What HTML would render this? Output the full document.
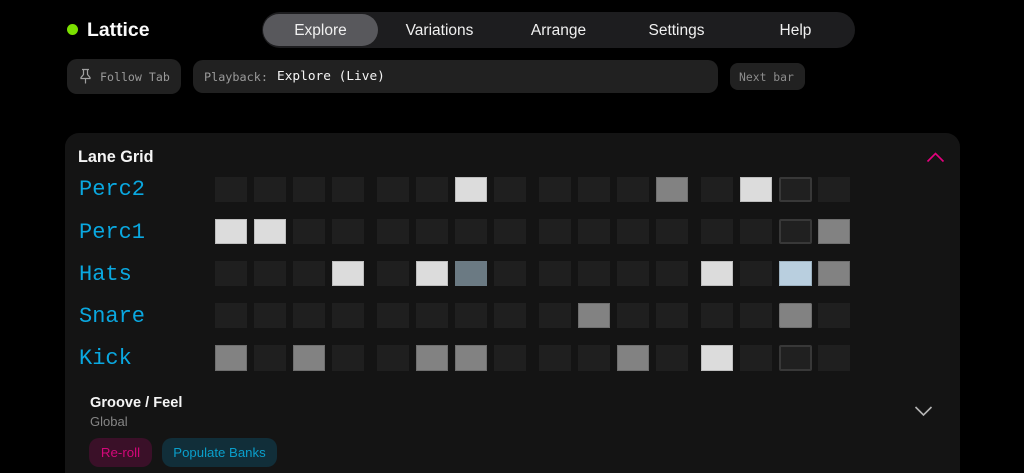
<!DOCTYPE html>
<html>
<head>
<meta charset="utf-8">
<style>
html,body{margin:0;padding:0;background:#000;width:1024px;height:473px;overflow:hidden}
body{position:relative;font-family:"Liberation Sans",sans-serif;color:#fff}
.a{position:absolute;white-space:nowrap}
.mono{font-family:"DejaVu Sans Mono",monospace}
.cell{position:absolute;width:32px;height:25.4px;background:#1f1f1f;box-sizing:border-box}
.w{background:#dcdcdc;box-shadow:inset 0 0 0 1px #bdbdbd}
.g{background:#828282;box-shadow:inset 0 0 0 1px #6f6f6f}
.s{background:#6b7a83}
.b{background:#b9cfdf;box-shadow:inset 0 0 0 1px #9cb1c0}
.r{border:2px solid #383838;border-radius:2px;background:#202020;width:33px}
.lab{font-family:"Liberation Mono",monospace;font-size:22px;color:#0aa8e0;left:79px;line-height:26px}
.tab{position:absolute;top:0;height:35px;line-height:35px;text-align:center;font-size:15.5px;color:#f0f0f0;width:119px}
</style>
</head>
<body>
<div class="a" style="left:67px;top:24px;width:11px;height:11px;border-radius:50%;background:#7be000"></div>
<div class="a" style="left:87px;top:16px;font-size:19.4px;font-weight:700;line-height:28px;color:#fafafa">Lattice</div>

<div class="a" style="left:262px;top:12px;width:593px;height:36px;border-radius:18px;background:#1d1d1f"></div>
<div class="a" style="left:263px;top:14px;width:115px;height:32px;border-radius:16px;background:#58585c"></div>
<div class="a" style="left:262px;top:13px;width:593px;height:35px">
<div class="tab" style="left:-1px">Explore</div>
<div class="tab" style="left:118px">Variations</div>
<div class="tab" style="left:237px">Arrange</div>
<div class="tab" style="left:355px">Settings</div>
<div class="tab" style="left:474px">Help</div>
</div>

<div class="a" style="left:67px;top:59px;width:114px;height:35px;border-radius:10px;background:#212121"></div>
<svg class="a" style="left:78px;top:68px" width="15" height="17" viewBox="0 0 15 17" fill="none" stroke="#a0a0a0" stroke-width="1.2"><path d="M4 1.5H11M5.5 1.5V6.5L3 9.5V10.5H12V9.5L9.5 6.5V1.5M7.5 10.5V15.5"/></svg>
<div class="a mono" style="left:100px;top:69px;font-size:11.6px;line-height:16px;color:#9a9a9a">Follow Tab</div>

<div class="a" style="left:193px;top:60px;width:525px;height:33px;border-radius:10px;background:#212121"></div>
<div class="a mono" style="left:204px;top:69px;font-size:11.8px;line-height:16px;color:#9a9a9a">Playback:</div>
<div class="a mono" style="left:277px;top:69px;font-size:12.8px;line-height:16px;color:#f5f5f5">Explore (Live)</div>

<div class="a" style="left:730px;top:63px;width:75px;height:27px;border-radius:8px;background:#212121"></div>
<div class="a mono" style="left:739px;top:69px;font-size:11.4px;line-height:16px;color:#8c8c8c">Next bar</div>

<div class="a" style="left:65px;top:133px;width:895px;height:360px;border-radius:14px;background:#141414"></div>
<div class="a" style="left:78px;top:146px;font-size:16.2px;font-weight:700;line-height:22px;color:#f5f5f5">Lane Grid</div>
<svg class="a" style="left:926px;top:151px" width="19" height="12" viewBox="0 0 19 12" fill="none" stroke="#e6007e" stroke-width="1.6"><path d="M1.5 10.5L9.5 2.5L17.5 10.5"/></svg>

<div class="a lab" style="top:177px">Perc2</div>
<div class="a lab" style="top:220px">Perc1</div>
<div class="a lab" style="top:262px">Hats</div>
<div class="a lab" style="top:304px">Snare</div>
<div class="a lab" style="top:346px">Kick</div>

<div id="grid">
<div class="cell" style="left:215px;top:176.7px"></div><div class="cell" style="left:254px;top:176.7px"></div><div class="cell" style="left:293px;top:176.7px"></div><div class="cell" style="left:332px;top:176.7px"></div><div class="cell" style="left:377px;top:176.7px"></div><div class="cell" style="left:416px;top:176.7px"></div><div class="cell w" style="left:455px;top:176.7px"></div><div class="cell" style="left:494px;top:176.7px"></div><div class="cell" style="left:539px;top:176.7px"></div><div class="cell" style="left:578px;top:176.7px"></div><div class="cell" style="left:617px;top:176.7px"></div><div class="cell g" style="left:656px;top:176.7px"></div><div class="cell" style="left:701px;top:176.7px"></div><div class="cell w" style="left:740px;top:176.7px"></div><div class="cell r" style="left:779px;top:176.7px"></div><div class="cell" style="left:818px;top:176.7px"></div>

<div class="cell w" style="left:215px;top:219px"></div><div class="cell w" style="left:254px;top:219px"></div><div class="cell" style="left:293px;top:219px"></div><div class="cell" style="left:332px;top:219px"></div><div class="cell" style="left:377px;top:219px"></div><div class="cell" style="left:416px;top:219px"></div><div class="cell" style="left:455px;top:219px"></div><div class="cell" style="left:494px;top:219px"></div><div class="cell" style="left:539px;top:219px"></div><div class="cell" style="left:578px;top:219px"></div><div class="cell" style="left:617px;top:219px"></div><div class="cell" style="left:656px;top:219px"></div><div class="cell" style="left:701px;top:219px"></div><div class="cell" style="left:740px;top:219px"></div><div class="cell r" style="left:779px;top:219px"></div><div class="cell g" style="left:818px;top:219px"></div>

<div class="cell" style="left:215px;top:261px"></div><div class="cell" style="left:254px;top:261px"></div><div class="cell" style="left:293px;top:261px"></div><div class="cell w" style="left:332px;top:261px"></div><div class="cell" style="left:377px;top:261px"></div><div class="cell w" style="left:416px;top:261px"></div><div class="cell s" style="left:455px;top:261px"></div><div class="cell" style="left:494px;top:261px"></div><div class="cell" style="left:539px;top:261px"></div><div class="cell" style="left:578px;top:261px"></div><div class="cell" style="left:617px;top:261px"></div><div class="cell" style="left:656px;top:261px"></div><div class="cell w" style="left:701px;top:261px"></div><div class="cell" style="left:740px;top:261px"></div><div class="cell b" style="left:779px;top:261px;width:33px"></div><div class="cell g" style="left:818px;top:261px"></div>

<div class="cell" style="left:215px;top:303px"></div><div class="cell" style="left:254px;top:303px"></div><div class="cell" style="left:293px;top:303px"></div><div class="cell" style="left:332px;top:303px"></div><div class="cell" style="left:377px;top:303px"></div><div class="cell" style="left:416px;top:303px"></div><div class="cell" style="left:455px;top:303px"></div><div class="cell" style="left:494px;top:303px"></div><div class="cell" style="left:539px;top:303px"></div><div class="cell g" style="left:578px;top:303px"></div><div class="cell" style="left:617px;top:303px"></div><div class="cell" style="left:656px;top:303px"></div><div class="cell" style="left:701px;top:303px"></div><div class="cell" style="left:740px;top:303px"></div><div class="cell g" style="left:779px;top:303px;width:33px;border-radius:2px"></div><div class="cell" style="left:818px;top:303px"></div>

<div class="cell g" style="left:215px;top:345.3px"></div><div class="cell" style="left:254px;top:345.3px"></div><div class="cell g" style="left:293px;top:345.3px"></div><div class="cell" style="left:332px;top:345.3px"></div><div class="cell" style="left:377px;top:345.3px"></div><div class="cell g" style="left:416px;top:345.3px"></div><div class="cell g" style="left:455px;top:345.3px"></div><div class="cell" style="left:494px;top:345.3px"></div><div class="cell" style="left:539px;top:345.3px"></div><div class="cell" style="left:578px;top:345.3px"></div><div class="cell g" style="left:617px;top:345.3px"></div><div class="cell" style="left:656px;top:345.3px"></div><div class="cell w" style="left:701px;top:345.3px"></div><div class="cell" style="left:740px;top:345.3px"></div><div class="cell r" style="left:779px;top:345.3px"></div><div class="cell" style="left:818px;top:345.3px"></div>
</div>

<div class="a" style="left:90px;top:393px;font-size:14.6px;font-weight:700;line-height:20px;color:#f5f5f5">Groove / Feel</div>
<div class="a" style="left:90px;top:413px;font-size:13px;line-height:18px;color:#858585">Global</div>
<svg class="a" style="left:914px;top:405px" width="19" height="13" viewBox="0 0 19 13" fill="none" stroke="#b5b5b5" stroke-width="1.6"><path d="M1.5 2L9.5 10L17.5 2"/></svg>

<div class="a" style="left:89px;top:438px;width:63px;height:29px;border-radius:10px;background:#3a1028"></div>
<div class="a" style="left:89px;top:438px;width:63px;height:29px;line-height:29px;text-align:center;font-size:13.3px;color:#d4077a">Re-roll</div>
<div class="a" style="left:162px;top:438px;width:115px;height:29px;border-radius:10px;background:#112e39"></div>
<div class="a" style="left:162px;top:438px;width:115px;height:29px;line-height:29px;text-align:center;font-size:13.2px;color:#0a9fcb">Populate Banks</div>
</body>
</html>
